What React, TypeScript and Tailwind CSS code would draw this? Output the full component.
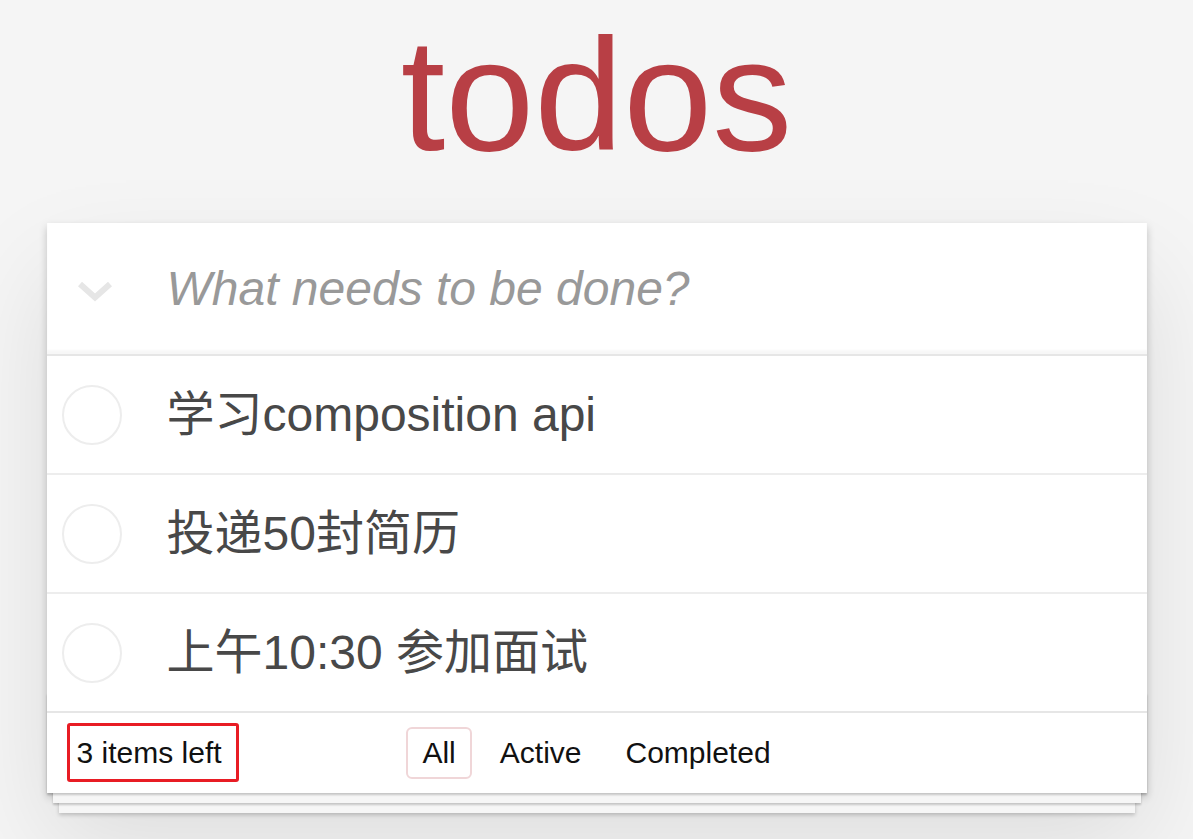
import React from "react";

const todos = ["学习composition api", "投递50封简历", "上午10:30 参加面试"];

export default function App() {
  return (
    <div
      className="min-h-screen bg-[#f5f5f5] pt-[15px] pb-[40px]"
      style={{ fontFamily: '"Liberation Sans", Arial, "Noto Sans CJK SC", sans-serif' }}
    >
      <h1 className="text-center text-[160px] leading-[160px] font-normal text-[#b83f45]">todos</h1>
      <div className="relative mx-auto mt-[48px] w-[1100px] bg-white shadow-[0_4px_8px_0_rgba(0,0,0,0.2),0_50px_100px_0_rgba(0,0,0,0.1)]">
        <div className="flex items-center h-[131px] shadow-[inset_0_-4px_2px_rgba(0,0,0,0.03)]">
          <div className="w-[120px] shrink-0">
            <svg className="ml-[31px] mt-[7px] block" width="34" height="21" viewBox="0 0 34 21">
              <polyline
                points="2,2 17,15.5 32,2"
                fill="none"
                stroke="#e6e6e6"
                strokeWidth="6"
                strokeLinejoin="miter"
              />
            </svg>
          </div>
          <span className="text-[48px] leading-[67px] italic text-[#999]">What needs to be done?</span>
        </div>
        <ul className="border-t-2 border-[#e6e6e6]">
          {todos.map((t, i) => (
            <li
              key={i}
              className={`flex items-center ${i < todos.length - 1 ? "border-b-2 border-[#ededed]" : ""}`}
            >
              <div className="w-[120px] shrink-0">
                <div className="ml-[15px] w-[60px] h-[60px] rounded-full border-2 border-[#ededed]" />
              </div>
              <span className="py-[30px] text-[48px] leading-[57px] text-[#484848]">{t}</span>
            </li>
          ))}
        </ul>
        <div className="relative h-[82px] border-t-2 border-[#e6e6e6] px-[30px] grid grid-cols-[1fr_auto_1fr] items-center text-[30px] leading-[40px] text-[#111]">
          <div className="pointer-events-none absolute left-0 right-0 bottom-0 h-[100px] shadow-[0_2px_2px_rgba(0,0,0,0.2),0_16px_0_-6px_#f6f6f6,0_18px_2px_-6px_rgba(0,0,0,0.2),0_32px_0_-12px_#f6f6f6,0_34px_4px_-12px_rgba(0,0,0,0.2)]" />
          <span className="relative justify-self-start">
            3 items left
            <span className="absolute left-[-10px] right-[-17px] top-[-10px] bottom-[-9px] border-[3px] border-[#e81c24] rounded-[3px]" />
          </span>
          <div className="relative flex items-center gap-[12px]">
            <span className="px-[14px] py-[4px] border-2 border-[#f0d6d8] rounded-[6px]">All</span>
            <span className="px-[14px] py-[4px] border-2 border-transparent rounded-[6px]">Active</span>
            <span className="px-[14px] py-[4px] border-2 border-transparent rounded-[6px]">Completed</span>
          </div>
          <div />
        </div>
      </div>
    </div>
  );
}
